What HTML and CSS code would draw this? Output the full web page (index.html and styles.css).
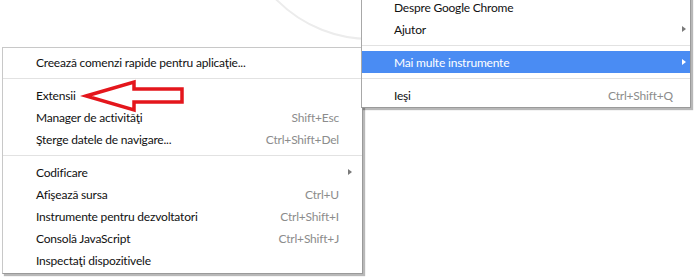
FILE: index.html
```html
<!DOCTYPE html>
<html lang="ro">

<head>
  <meta charset="UTF-8">
  <title>Mai multe instrumente</title>
  <link rel="stylesheet" href="styles.css">
</head>

<body>
  <div class="screen">
    <div class="ring"></div>

    <!-- submeniul Mai multe instrumente -->
    <div class="menu sub">
      <div class="item"><span>Creează comenzi rapide pentru aplicaţie...</span></div>
      <div class="sep"></div>
      <div class="item"><span>Extensii</span></div>
      <div class="item"><span>Manager de activităţi</span><span class="key">Shift+Esc</span></div>
      <div class="item"><span>Şterge datele de navigare...</span><span class="key">Ctrl+Shift+Del</span></div>
      <div class="sep"></div>
      <div class="item"><span>Codificare</span><i class="arrow"></i></div>
      <div class="item"><span>Afişează sursa</span><span class="key">Ctrl+U</span></div>
      <div class="item"><span>Instrumente pentru dezvoltatori</span><span class="key">Ctrl+Shift+I</span></div>
      <div class="item"><span>Consolă JavaScript</span><span class="key">Ctrl+Shift+J</span></div>
      <div class="item"><span>Inspectaţi dispozitivele</span></div>
    </div>

    <!-- meniul principal -->
    <div class="menu main">
      <div class="item"><span>Despre Google Chrome</span></div>
      <div class="item"><span>Ajutor</span><i class="arrow"></i></div>
      <div class="sep"></div>
      <div class="item active"><span>Mai multe instrumente</span><i class="arrow"></i></div>
      <div class="sep"></div>
      <div class="item"><span>Ieşi</span><span class="key">Ctrl+Shift+Q</span></div>
    </div>

    <!-- sageata rosie -->
    <svg class="pointer" width="110" height="40" viewBox="0 0 110 40">
      <polygon points="6,20 54,6 54,13 102,13 102,26 54,26 54,34" fill="none" stroke="#e4161c"
        stroke-width="3.5" stroke-linejoin="miter" />
    </svg>
  </div>
</body>

</html>
```

FILE: styles.css
```css
* {
  margin: 0;
  padding: 0;
  box-sizing: border-box;
}

body {
  background: #fff;
  font-family: Lato, "Noto Sans", sans-serif;
  font-size: 12px;
  letter-spacing: -0.2px;
  color: #111;
}

.screen {
  position: relative;
  width: 696px;
  height: 279px;
  overflow: hidden;
}

/* cercul din pagina nou fila */
.ring {
  position: absolute;
  left: 238px;
  top: -224px;
  width: 264px;
  height: 264px;
  border-radius: 50%;
  border: 2px solid #ececec;
}

.menu {
  position: absolute;
  background: #fff;
  border: 1px solid #b5b5b5;
  box-shadow: 2px 2px 1px rgba(0, 0, 0, 0.28);
}

.sub {
  left: 2px;
  top: 47px;
  width: 361px;
  padding: 3px 0 2px;
  border-color: #c8c8c8 #9a9a9a #9a9a9a #c8c8c8;
}

.main {
  left: 361px;
  top: -9px;
  width: 330px;
  padding: 4px 0 1px;
  border-color: #c8c8c8 #9a9a9a #9a9a9a #a8a8a8;
}

.item {
  display: flex;
  align-items: center;
  justify-content: space-between;
  height: 22px;
  white-space: nowrap;
}

.sub .item {
  padding: 0 23px 0 33px;
}

.main .item {
  padding: 0 17px 0 32px;
}

.key {
  color: #8c8c8c;
}

.sep {
  height: 1px;
  margin: 5px 0;
  background: #e2e2e2;
}

.arrow {
  width: 0;
  height: 0;
  border-left: 4px solid #7a7a7a;
  border-top: 3.5px solid transparent;
  border-bottom: 3.5px solid transparent;
}

.sub .arrow {
  margin-right: -13px;
}

.main .arrow {
  margin-right: -13px;
}

.active {
  background: #4a8cf3;
  color: #fff;
}

.active .arrow {
  border-left-color: #fff;
}

.pointer {
  position: absolute;
  left: 80px;
  top: 76px;
}
```
